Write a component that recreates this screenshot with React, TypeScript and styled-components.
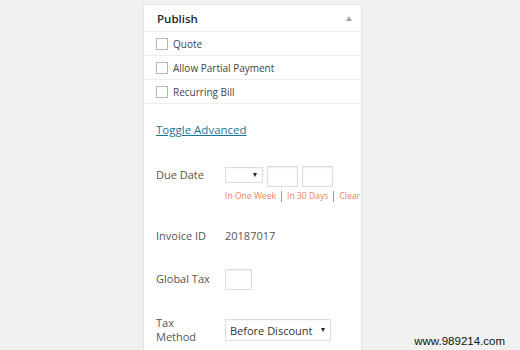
import * as React from 'react';
import styled, { createGlobalStyle } from 'styled-components';

const Global = createGlobalStyle`
  body {
    margin: 0;
    background: #f1f1f1;
    font-family: "Open Sans", "Liberation Sans", sans-serif;
  }
`;

const Page = styled.div`
  width: 520px;
  height: 350px;
  position: relative;
  overflow: hidden;
  padding: 4px 0 0 143px;
  box-sizing: border-box;
`;

const Box = styled.div`
  width: 219px;
  height: 360px;
  box-sizing: border-box;
  background: #fff;
  border: 1px solid #e5e5e5;
  box-shadow: 0 1px 1px rgba(0, 0, 0, 0.04);
`;

const Header = styled.div`
  height: 26px;
  display: flex;
  align-items: center;
  justify-content: space-between;
  padding: 0 9px 0 13px;
  border-bottom: 1px solid #eee;
  font-size: 11.5px;
  font-weight: 600;
  color: #23282d;
`;

const Arrow = styled.span`
  width: 0;
  height: 0;
  border-left: 3.5px solid transparent;
  border-right: 3.5px solid transparent;
  border-bottom: 5px solid #a0a5aa;
`;

const CheckRow = styled.label`
  height: 23px;
  display: flex;
  align-items: center;
  gap: 5px;
  padding-left: 12px;
  border-bottom: 1px solid #eee;
  font-size: 10px;
  color: #444;
`;

const Check = styled.span`
  width: 10px;
  height: 10px;
  border: 1px solid #b4b9be;
  background: #fff;
`;

const Body = styled.div`
  padding: 18px 12px 0 12px;
`;

const Toggle = styled.a`
  font-size: 11.5px;
  color: #21759b;
  text-decoration: underline;
  line-height: 16px;
  display: block;
`;

const FormRow = styled.div<{ $top: number }>`
  display: grid;
  grid-template-columns: 69px 1fr;
  align-items: start;
  margin-top: ${p => p.$top}px;
`;

const Label = styled.div`
  font-size: 11px;
  color: #555;
  line-height: 14px;
`;

const Value = styled.div`
  font-size: 11px;
  color: #555;
  line-height: 14px;
`;

const Inline = styled.div`
  display: flex;
  align-items: flex-start;
  gap: 4px;
`;

const MiniSelect = styled.div<{ $w: number; $h: number }>`
  width: ${p => p.$w}px;
  height: ${p => p.$h}px;
  box-sizing: border-box;
  border: 1px solid #ddd;
  background: #fff;
  display: flex;
  align-items: center;
  justify-content: space-between;
  padding: 0 5px 0 4px;
  font-size: 11px;
  color: #333;
  box-shadow: inset 0 1px 2px rgba(0, 0, 0, 0.04);
`;

const Caret = styled.span`
  width: 0;
  height: 0;
  border-left: 2.5px solid transparent;
  border-right: 2.5px solid transparent;
  border-top: 4px solid #222;
`;

const Field = styled.div<{ $w: number }>`
  width: ${p => p.$w}px;
  height: 21px;
  box-sizing: border-box;
  border: 1px solid #ddd;
  background: #fff;
  box-shadow: inset 0 1px 2px rgba(0, 0, 0, 0.07);
`;

const Links = styled.div`
  display: flex;
  align-items: center;
  margin-top: 3px;
  font-size: 8.6px;
  color: #f0825a;
  white-space: nowrap;
`;

const Sep = styled.span`
  width: 1px;
  height: 11px;
  background: #999;
  margin: 0 5px;
`;

const Watermark = styled.div`
  position: absolute;
  right: 15px;
  bottom: 3px;
  font-family: "Liberation Sans", Arial, sans-serif;
  font-size: 11.5px;
  color: #111;
`;

export default function App() {
  return (
    <>
      <Global />
      <Page>
        <Box>
          <Header>
            Publish
            <Arrow />
          </Header>
          {['Quote', 'Allow Partial Payment', 'Recurring Bill'].map(t => (
            <CheckRow key={t}>
              <Check />
              {t}
            </CheckRow>
          ))}
          <Body>
            <Toggle>Toggle Advanced</Toggle>
            <FormRow $top={28}>
              <Label style={{ paddingTop: 2 }}>Due Date</Label>
              <div>
                <Inline>
                  <MiniSelect $w={38} $h={16} style={{ marginTop: 1 }}>
                    <span />
                    <Caret />
                  </MiniSelect>
                  <Field $w={31} />
                  <Field $w={31} />
                </Inline>
                <Links>
                  In One Week
                  <Sep />
                  In 30 Days
                  <Sep />
                  Clear
                </Links>
              </div>
            </FormRow>
            <FormRow $top={27}>
              <Label>Invoice ID</Label>
              <Value>20187017</Value>
            </FormRow>
            <FormRow $top={26}>
              <Label style={{ paddingTop: 3 }}>Global Tax</Label>
              <Field $w={27} />
            </FormRow>
            <FormRow $top={26}>
              <Label>
                Tax
                <br />
                Method
              </Label>
              <MiniSelect $w={106} $h={22} style={{ marginTop: 3 }}>
                Before Discount
                <Caret />
              </MiniSelect>
            </FormRow>
          </Body>
        </Box>
        <Watermark>www.989214.com</Watermark>
      </Page>
    </>
  );
}
